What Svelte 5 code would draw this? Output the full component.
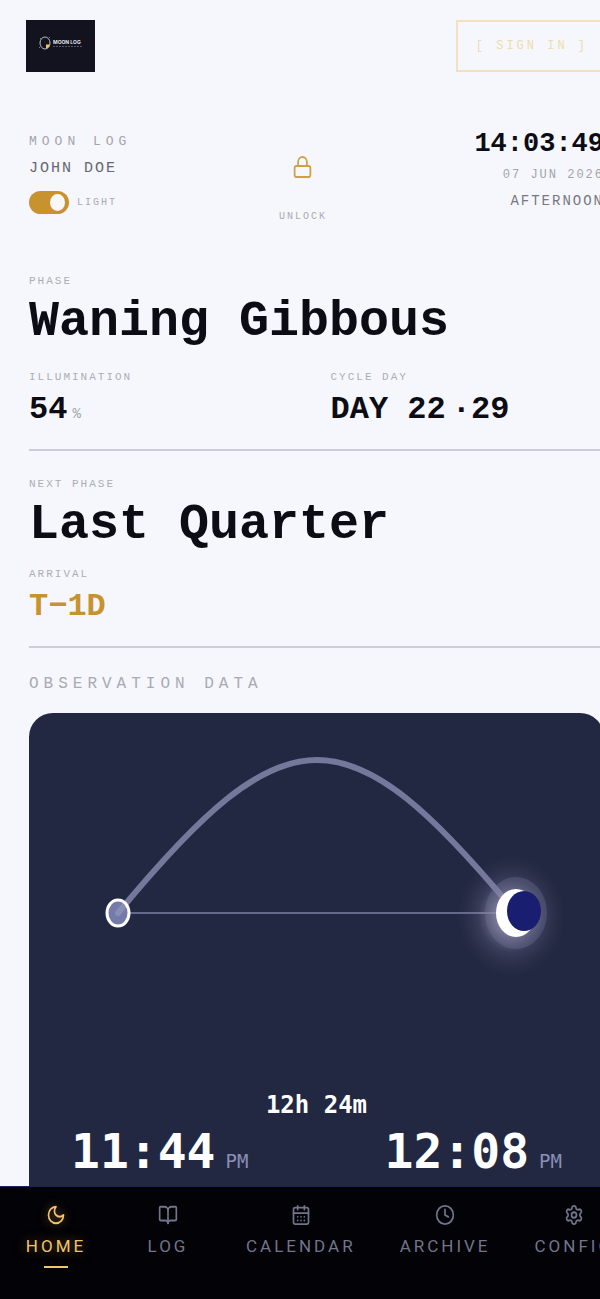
<script>
  let light = $state(true);
  let active = $state('Home');

  const tabs = [
    { name: 'Home', icon: 'moon' },
    { name: 'Log', icon: 'book' },
    { name: 'Calendar', icon: 'calendar' },
    { name: 'Archive', icon: 'clock' },
    { name: 'Config', icon: 'gear' }
  ];

  const times = [
    { value: '11:44', suffix: 'PM' },
    { value: '12:08', suffix: 'PM' }
  ];
</script>

<div class="page">
  <header class="topbar">
    <a href="#home" class="logo" aria-label="Moon Log">
      <svg width="69" height="52" viewBox="0 0 69 52">
        <rect width="69" height="52" fill="#12131e" />
        <ellipse cx="19" cy="23" rx="5" ry="6" fill="none" stroke="#b9bac6" stroke-width="1" />
        <path d="M20 24.500h4a5 5 0 0 1-4 4z" fill="#f0c661" />
        <path d="M14 18l1 1M24 17l-1 1M13 28l1-1" stroke="#77798a" stroke-width="1" />
        <text x="27" y="24" font-size="5" font-weight="700" fill="#e4e4ea" font-family="Inter, sans-serif">MOON LOG</text>
        <path d="M27 26.500h30" stroke="#55576a" stroke-width="1" stroke-dasharray="2 1" />
      </svg>
    </a>
    <button type="button" class="signin">[ SIGN IN ]</button>
  </header>

  <section class="info">
    <div class="who">
      <span class="brand">MOON LOG</span>
      <span class="user">JOHN DOE</span>
      <label class="theme">
        <input type="checkbox" bind:checked={light} />
        <span class="track"><span class="knob"></span></span>
        <span class="tiny">LIGHT</span>
      </label>
    </div>

    <button type="button" class="unlock">
      <svg width="21" height="24" viewBox="0 0 24 24" preserveAspectRatio="none" fill="none" stroke="#cfa04a" stroke-width="2" stroke-linecap="round" stroke-linejoin="round">
        <rect x="3" y="11" width="18" height="11" rx="2" />
        <path d="M7 11V7a5 5 0 0 1 10 0v4" />
      </svg>
      <span class="tiny">UNLOCK</span>
    </button>

    <div class="when">
      <time class="clock">14:03:49</time>
      <span class="date">07 JUN 2026</span>
      <span class="part">AFTERNOON</span>
    </div>
  </section>

  <main>
    <section class="block">
      <span class="label">PHASE</span>
      <h1>Waning Gibbous</h1>
      <div class="cols">
        <div class="stat">
          <span class="label">ILLUMINATION</span>
          <span class="value">54<small>%</small></span>
        </div>
        <div class="stat">
          <span class="label">CYCLE DAY</span>
          <span class="value">DAY 22<span class="total">·29</span></span>
        </div>
      </div>
    </section>

    <section class="block next">
      <span class="label">NEXT PHASE</span>
      <h1>Last Quarter</h1>
      <div class="stat">
        <span class="label">ARRIVAL</span>
        <span class="value gold">T−1D</span>
      </div>
    </section>

    <h2>OBSERVATION DATA</h2>

    <section class="card">
      <svg class="arc" viewBox="0 0 575 376" aria-hidden="true">
        <defs>
          <radialGradient id="glow">
            <stop offset="0.3" stop-color="#b9b0cc" stop-opacity="0.6" />
            <stop offset="0.6" stop-color="#8d84a8" stop-opacity="0.22" />
            <stop offset="1" stop-color="#5a4f78" stop-opacity="0" />
          </radialGradient>
        </defs>
        <path d="M89 200H487" stroke="#666a8a" stroke-width="2" />
        <ellipse cx="89" cy="200" rx="11" ry="13" fill="#757ba9" />
        <path d="M89 200C258-4 318-4 487 200" fill="none" stroke="#9094bb" stroke-opacity="0.750" stroke-width="6" stroke-linecap="round" />
        <ellipse cx="89" cy="200" rx="11" ry="13" fill="none" stroke="#fff" stroke-width="3" />
        <ellipse cx="482" cy="203" rx="54" ry="60" fill="url(#glow)" />
        <ellipse cx="487" cy="200" rx="31" ry="36" fill="#6c7296" fill-opacity="0.350" />
        <ellipse cx="487" cy="200" rx="20" ry="24" fill="#fff" />
        <ellipse cx="495" cy="198" rx="17" ry="20" fill="#1a1e70" />
      </svg>
      <div class="duration">12h 24m</div>
      <div class="times">
        {#each times as t}
          <div class="time">{t.value}<span>{t.suffix}</span></div>
        {/each}
      </div>
    </section>
  </main>
</div>

<nav>
  {#each tabs as tab}
    <button type="button" class="tab" class:active={active === tab.name} onclick={() => active = tab.name}>
      <svg width="20" height="22" viewBox="0 0 24 24" preserveAspectRatio="none" fill="none" stroke="currentColor" stroke-width="2" stroke-linecap="round" stroke-linejoin="round">
        {#if tab.icon === 'moon'}
          <path d="M12 3a6 6 0 0 0 9 9 9 9 0 1 1-9-9Z" />
        {:else if tab.icon === 'book'}
          <path d="M12 7v14" />
          <path d="M3 18a1 1 0 0 1-1-1V4a1 1 0 0 1 1-1h5a4 4 0 0 1 4 4 4 4 0 0 1 4-4h5a1 1 0 0 1 1 1v13a1 1 0 0 1-1 1h-6a3 3 0 0 0-3 3 3 3 0 0 0-3-3z" />
        {:else if tab.icon === 'calendar'}
          <path d="M8 2v4M16 2v4" />
          <rect x="3" y="4" width="18" height="18" rx="2" />
          <path d="M3 10h18M8 14h.01M12 14h.01M16 14h.01M8 18h.01M12 18h.01M16 18h.01" />
        {:else if tab.icon === 'clock'}
          <circle cx="12" cy="12" r="10" />
          <path d="M12 6v6l4 2" />
        {:else}
          <path d="M9.671 4.136a2.34 2.34 0 0 1 4.659 0 2.34 2.34 0 0 0 3.319 1.915 2.34 2.34 0 0 1 2.33 4.033 2.34 2.34 0 0 0 0 3.831 2.34 2.34 0 0 1-2.33 4.033 2.34 2.34 0 0 0-3.319 1.915 2.34 2.34 0 0 1-4.659 0 2.34 2.34 0 0 0-3.32-1.915 2.34 2.34 0 0 1-2.33-4.033 2.34 2.34 0 0 0 0-3.831A2.34 2.34 0 0 1 6.35 6.051a2.34 2.34 0 0 0 3.319-1.915" />
          <circle cx="12" cy="12" r="3" />
        {/if}
      </svg>
      <span>{tab.name}</span>
    </button>
  {/each}
</nav>

<style>
  :global(body) {
    background: #f6f7fc;
    overflow-x: hidden;
  }

  .page {
    font-family: "Liberation Mono", "Courier New", monospace;
    color: #0b0c14;
    /* content runs slightly past the right edge */
    margin-right: -4px;
    padding: 20px 0 0 29px;
  }

  button {
    background: transparent;
    border: none;
    padding: 0;
    font-family: inherit;
    cursor: pointer;
  }

  .topbar {
    display: flex;
    justify-content: space-between;
    margin: 0 -4px 57px -3px;
  }

  .logo, .logo svg { display: block; }

  .signin {
    height: 52px;
    padding: 0 18px;
    border: 2px solid #f3e0bf;
    color: #efdcae;
    font-size: 12px;
    letter-spacing: 3px;
    white-space: pre;
  }

  /* ── INFO ROW ── */
  .info {
    display: flex;
    justify-content: space-between;
    align-items: flex-start;
    margin-bottom: 48px;
  }

  .who {
    display: flex;
    flex-direction: column;
    padding-top: 4px;
  }

  .brand {
    font-size: 13px;
    line-height: 18px;
    letter-spacing: 5px;
    color: #a3a4ad;
  }

  .user {
    margin-top: 8px;
    font-size: 15px;
    line-height: 20px;
    letter-spacing: 2px;
    color: #666770;
  }

  .theme {
    display: flex;
    align-items: center;
    gap: 8px;
    margin-top: 12px;
    cursor: pointer;
  }
  .theme input {
    position: absolute;
    opacity: 0;
  }

  .track {
    display: flex;
    align-items: center;
    width: 40px;
    height: 23px;
    padding: 0 4px;
    box-sizing: border-box;
    border-radius: 12px;
    background: #b6b7c1;
  }
  .theme input:checked + .track {
    background: #c8922e;
    justify-content: flex-end;
  }

  .knob {
    width: 15px;
    height: 17px;
    border-radius: 50%;
    background: #f8f8fb;
  }

  .tiny {
    font-size: 10px;
    line-height: 16px;
    letter-spacing: 2px;
    color: #a9aab3;
  }

  .unlock {
    display: flex;
    flex-direction: column;
    align-items: center;
    gap: 30px;
    padding-top: 26px;
  }

  .when {
    display: flex;
    flex-direction: column;
    align-items: flex-end;
  }

  .clock {
    font-size: 27px;
    line-height: 30px;
    font-weight: 700;
  }

  .date {
    margin-top: 8px;
    font-size: 12px;
    line-height: 16px;
    letter-spacing: 2px;
    color: #a3a4ad;
  }

  .part {
    margin-top: 10px;
    font-size: 14px;
    line-height: 16px;
    letter-spacing: 2px;
    color: #777882;
  }

  /* ── PHASE BLOCKS ── */
  .block {
    display: flex;
    flex-direction: column;
    padding-bottom: 20px;
    border-bottom: 2px solid #cccdd6;
  }

  .label {
    font-size: 11px;
    line-height: 16px;
    letter-spacing: 2px;
    color: #acadb6;
  }

  h1 {
    margin: 4px 0 18px;
    font-size: 50px;
    line-height: 58px;
    font-weight: 700;
    white-space: nowrap;
  }

  .next { padding-top: 25px; }
  .next h1 { margin-bottom: 12px; }

  .cols {
    display: grid;
    grid-template-columns: 1fr 1fr;
    gap: 28px;
  }

  .stat {
    display: flex;
    flex-direction: column;
    gap: 6px;
  }

  .value {
    display: flex;
    align-items: baseline;
    font-size: 32px;
    line-height: 38px;
    font-weight: 700;
  }
  .value small {
    margin-left: 5px;
    font-size: 14px;
    line-height: 16px;
    font-weight: 400;
    color: #a3a4ad;
  }
  .total { margin-left: 6px; }
  .gold { color: #c8922e; }

  h2 {
    margin: 26px 0 19px;
    font-size: 16px;
    line-height: 20px;
    font-weight: 400;
    letter-spacing: 5px;
    color: #a9aab3;
  }

  /* ── OBSERVATION CARD ── */
  .card {
    padding-bottom: 80px;
    border-radius: 24px;
    background: #222842;
    color: #fff;
    font-family: "DejaVu Sans Mono", monospace;
    font-weight: 700;
  }

  .arc {
    display: block;
    width: 100%;
  }

  .duration {
    text-align: center;
    font-size: 24px;
    line-height: 32px;
  }

  .times {
    display: flex;
    justify-content: space-between;
    padding: 0 42px;
  }

  .time {
    font-size: 48px;
    line-height: 60px;
  }
  .time span {
    margin-left: 10px;
    font-size: 19px;
    font-weight: 400;
    color: #8a8fb5;
  }

  /* ── NAV ── */
  nav {
    position: fixed;
    left: 0;
    right: 0;
    bottom: 0;
    display: flex;
    overflow: hidden;
    background: #020207;
    border-top: 1px solid #182850;
  }

  .tab {
    flex: none;
    display: flex;
    flex-direction: column;
    align-items: center;
    min-width: 112px;
    padding: 17px 22px 31px;
    font-family: Roboto, sans-serif;
    font-size: 17px;
    line-height: 20px;
    letter-spacing: 3px;
    text-transform: uppercase;
    color: #72758c;
  }
  .tab span { margin-top: 10px; }
  .tab::after {
    content: "";
    width: 24px;
    height: 2px;
    margin-top: 10px;
  }

  .tab.active {
    color: #efc46c;
    text-shadow: 0 0 12px rgba(239, 170, 60, 0.5);
  }
  .tab.active svg { filter: drop-shadow(0 0 5px rgba(239, 170, 60, 0.5)); }
  .tab.active::after { background: #efc46c; }
</style>
